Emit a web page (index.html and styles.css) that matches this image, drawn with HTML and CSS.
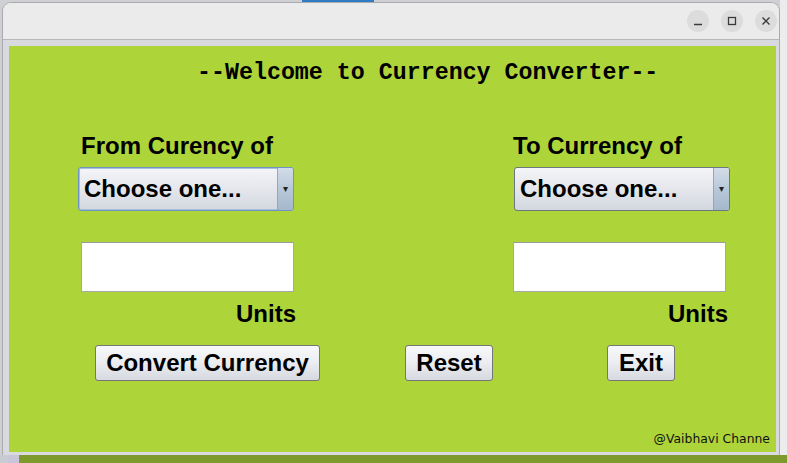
FILE: index.html
```html
<!DOCTYPE html>
<html>
<head>
<meta charset="utf-8">
<title>Currency Converter</title>
<link rel="stylesheet" href="styles.css">
</head>
<body>
<div class="desk-top"><span class="taskbar-mark"></span></div>
<div class="window">
  <div class="titlebar">
    <button class="wbtn" aria-label="Minimize">
      <svg width="22" height="22" viewBox="0 0 22 22"><path d="M7 14.5h8" stroke="#3a3a3a" stroke-width="1.5" fill="none"/></svg>
    </button>
    <button class="wbtn" aria-label="Maximize">
      <svg width="22" height="22" viewBox="0 0 22 22"><rect x="7.5" y="7.5" width="7" height="7" stroke="#3a3a3a" stroke-width="1.3" fill="none"/></svg>
    </button>
    <button class="wbtn" aria-label="Close">
      <svg width="22" height="22" viewBox="0 0 22 22"><path d="M7.5 7.5l7 7M14.5 7.5l-7 7" stroke="#3a3a3a" stroke-width="1.4" fill="none"/></svg>
    </button>
  </div>
  <div class="frame">
    <div class="panel">
      <h1 class="heading">--Welcome to Currency Converter--</h1>
      <div class="columns">
        <div class="col col-left">
          <div class="label">From Curency of</div>
          <div class="combo focused"><span class="combo-text">Choose one...</span><span class="combo-arrow">&#9662;</span></div>
          <div class="field"></div>
          <div class="units">Units</div>
        </div>
        <div class="col col-right">
          <div class="label">To Currency of</div>
          <div class="combo"><span class="combo-text">Choose one...</span><span class="combo-arrow">&#9662;</span></div>
          <div class="field"></div>
          <div class="units">Units</div>
        </div>
      </div>
      <div class="actions">
        <button class="btn btn-convert">Convert Currency</button>
        <button class="btn btn-reset">Reset</button>
        <button class="btn btn-exit">Exit</button>
      </div>
      <div class="credit">@Vaibhavi Channe</div>
    </div>
  </div>
</div>
<div class="desk-bottom"></div>
</body>
</html>
```
FILE: styles.css
```css
* { box-sizing: border-box; }
html, body { margin: 0; padding: 0; }
body {
  width: 787px;
  height: 463px;
  overflow: hidden;
  background: linear-gradient(to right, #cfd0d3 0, #cfd0d3 780px, #ececec 780px);
  font-family: "Liberation Sans", Arial, sans-serif;
  position: relative;
}
.desk-top {
  height: 2px;
  position: relative;
}
.taskbar-mark {
  position: absolute;
  left: 302px;
  top: 0;
  width: 72px;
  height: 2px;
  background: #2f7bc4;
}
.window {
  margin-left: 2px;
  width: 778px;
  border: 1px solid #a9abaf;
  border-bottom: 0;
  border-radius: 9px 9px 0 0;
  overflow: hidden;
  background: #d8dae0;
}
.titlebar {
  height: 37px;
  background: #ebebeb;
  border-bottom: 1px solid #b6b8bc;
  display: flex;
  justify-content: flex-end;
  align-items: center;
  gap: 12px;
  padding-right: 2px;
}
.wbtn {
  width: 22px;
  height: 22px;
  border-radius: 50%;
  border: 0;
  padding: 0;
  background: #dcdcdc;
  display: flex;
  align-items: center;
  justify-content: center;
}
.wbtn svg { display: block; }
.frame {
  padding: 6px 3px 3px 6px;
  background: #d8dae0;
}
.panel {
  height: 406px;
  background: #add53a;
  display: flex;
  flex-direction: column;
  padding-top: 14px;
}
.heading {
  margin: 0;
  padding-left: 188px;
  font-family: "Liberation Mono", "Courier New", monospace;
  font-weight: bold;
  font-size: 23.3px;
  line-height: 26px;
  color: #000;
  white-space: nowrap;
}
.columns {
  display: grid;
  grid-template-columns: 218px 218px;
  column-gap: 217px;
  padding-left: 69px;
  margin-top: 46px;
}
.col { display: flex; flex-direction: column; }
.label, .units {
  font-weight: bold;
  font-size: 24px;
  line-height: 28px;
  color: #000;
  white-space: nowrap;
}
.col-left .label { padding-left: 3px; }
.col-right .label { padding-left: 0; }
.combo {
  margin-top: 7px;
  width: 216px;
  height: 44px;
  border: 1px solid #6e7680;
  border-radius: 3px;
  background: linear-gradient(#f4f5f8 0%, #e6e8ed 45%, #d3d7de 100%);
  display: flex;
  align-items: stretch;
  overflow: hidden;
}
.col-right .combo { margin-left: 1px; }
.combo.focused {
  border-color: #6d94c4;
  box-shadow: 0 0 0 1px #a5c0dd inset;
}
.combo-text {
  flex: 1;
  font-weight: bold;
  font-size: 24px;
  line-height: 42px;
  padding-left: 5px;
  color: #000;
  white-space: nowrap;
}
.combo-arrow {
  width: 16px;
  border-left: 1px solid #9aa6b4;
  background: linear-gradient(#d3dce8 0%, #b8c8d9 50%, #a4b8cd 100%);
  font-size: 10px;
  line-height: 42px;
  text-align: center;
  color: #222;
}
.field {
  margin-top: 31px;
  width: 213px;
  height: 50px;
  background: #fff;
  border: 1px solid #a7a7ad;
  border-top-color: #9a9aa0;
}
.col-left .field { margin-left: 3px; }
.col-right .field { margin-left: 0; }
.units {
  margin-top: 8px;
  text-align: right;
}
.col-left .units { width: 218px; }
.col-right .units { width: 215px; }
.actions {
  display: flex;
  align-items: flex-start;
  margin-top: 17px;
  padding-left: 86px;
}
.btn {
  height: 36px;
  border: 1px solid #74767c;
  border-radius: 3px;
  background: linear-gradient(#f8f8fa 0%, #eceef2 45%, #d6d9df 100%);
  font-family: "Liberation Sans", Arial, sans-serif;
  font-weight: bold;
  font-size: 24px;
  line-height: 32px;
  color: #000;
  padding: 0;
  text-align: center;
}
.btn-convert { width: 225px; }
.btn-reset { width: 88px; margin-left: 85px; }
.btn-exit { width: 68px; margin-left: 114px; }
.credit {
  margin-top: auto;
  margin-bottom: 6px;
  align-self: flex-end;
  padding-right: 6px;
  font-family: "DejaVu Sans", sans-serif;
  font-size: 12.4px;
  line-height: 15px;
  color: #111;
}
.desk-bottom {
  height: 8px;
  background: linear-gradient(to right, #c9cbd2 0, #c9cbd2 8px, #c9c6dc 8px, #c9c6dc 19px, #7e9a2c 19px);
}
```
